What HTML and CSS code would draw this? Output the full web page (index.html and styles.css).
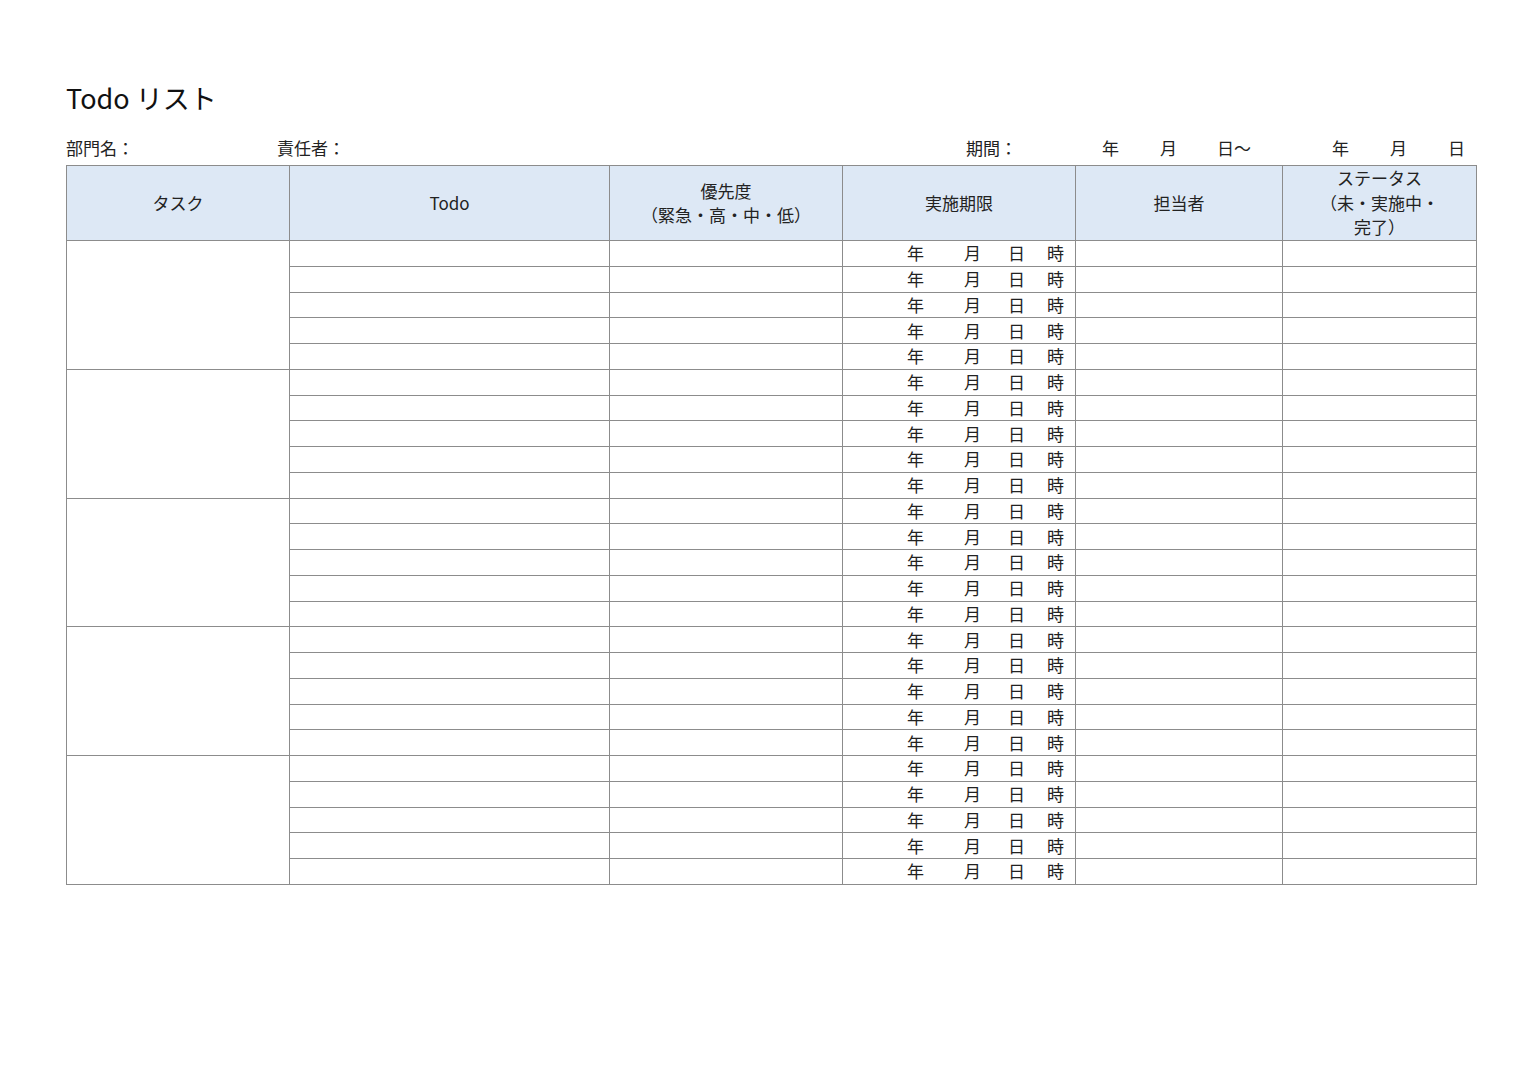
FILE: index.html
```html
<!DOCTYPE html>
<html lang="ja">
<head>
<meta charset="utf-8">
<title>Todo リスト</title>
<link rel="stylesheet" href="styles.css">
</head>
<body>
<div class="page">
  <h1 class="title">Todo リスト</h1>
  <div class="info">
    <span class="dept">部門名：</span>
    <span class="owner">責任者：</span>
    <span class="period">期間：</span>
    <span class="p-y1">年</span>
    <span class="p-m1">月</span>
    <span class="p-d1">日～</span>
    <span class="p-y2">年</span>
    <span class="p-m2">月</span>
    <span class="p-d2">日</span>
  </div>
  <table class="todo">
    <colgroup>
      <col class="c1"><col class="c2"><col class="c3"><col class="c4"><col class="c5"><col class="c6">
    </colgroup>
    <thead>
      <tr>
        <th>タスク</th>
        <th>Todo</th>
        <th>優先度<br>（緊急・高・中・低）</th>
        <th>実施期限</th>
        <th>担当者</th>
        <th>ステータス<br>（未・実施中・<br>完了）</th>
      </tr>
    </thead>
    <tbody id="rows"></tbody>
  </table>
</div>
<script src="script.js"></script>
</body>
</html>
```
FILE: script.js
```js
(function () {
  var tbody = document.getElementById('rows');
  var html = '';
  for (var g = 0; g < 5; g++) {
    for (var r = 0; r < 5; r++) {
      html += '<tr' + (r === 0 ? ' class="grp"' : '') + '>';
      if (r === 0) html += '<td rowspan="5" class="task"></td>';
      html += '<td></td><td></td>';
      html += '<td class="date"><span class="dy">年</span><span class="dm">月</span><span class="dd">日</span><span class="dh">時</span></td>';
      html += '<td></td><td></td></tr>';
    }
  }
  tbody.innerHTML = html;
})();
```
FILE: styles.css
```css
html, body {
  margin: 0;
  padding: 0;
  background: #ffffff;
}
body {
  font-family: "Noto Sans CJK JP", "Noto Sans", sans-serif;
  color: #222222;
}
.page {
  padding: 82px 0 0 66px;
  width: 1410px;
}
.title {
  margin: 0;
  font-size: 27px;
  font-weight: 400;
  line-height: 32px;
  color: #111;
}
.info {
  margin-top: 22px;
  display: flex;
  font-size: 17px;
  line-height: 24px;
  height: 24px;
  white-space: nowrap;
}
.info span { display: inline-block; }
.dept { width: 211px; }
.owner { width: 689px; }
.period { width: 136px; }
.p-y1 { width: 58px; }
.p-m1 { width: 57px; }
.p-d1 { width: 115px; }
.p-y2 { width: 58px; }
.p-m2 { width: 58px; }
.p-d2 { width: 20px; }

.todo {
  margin-top: 5px;
  border-collapse: collapse;
  table-layout: fixed;
  width: 1410px;
  font-size: 17px;
  border: 1px solid #9a9a9a;
}
.c1 { width: 223px; }
.c2 { width: 320px; }
.c3 { width: 233px; }
.c4 { width: 233px; }
.c5 { width: 207px; }
.c6 { width: 194px; }
.todo th {
  background: #dde8f5;
  font-weight: 400;
  height: 74px;
  padding: 0;
  line-height: 24.5px;
  border: 1px solid #8c8c8c;
  text-align: center;
  vertical-align: middle;
  color: #222;
}
.todo td {
  border: 1px solid #8c8c8c;
  height: 24.76px;
  padding: 0;
  line-height: 24px;
}
.todo td.date {
  white-space: nowrap;
  padding-left: 64px;
}
.date span { display: inline-block; width: 17px; }
.date .dm { margin-left: 40px; }
.date .dd { margin-left: 27px; }
.date .dh { margin-left: 22px; }
```
